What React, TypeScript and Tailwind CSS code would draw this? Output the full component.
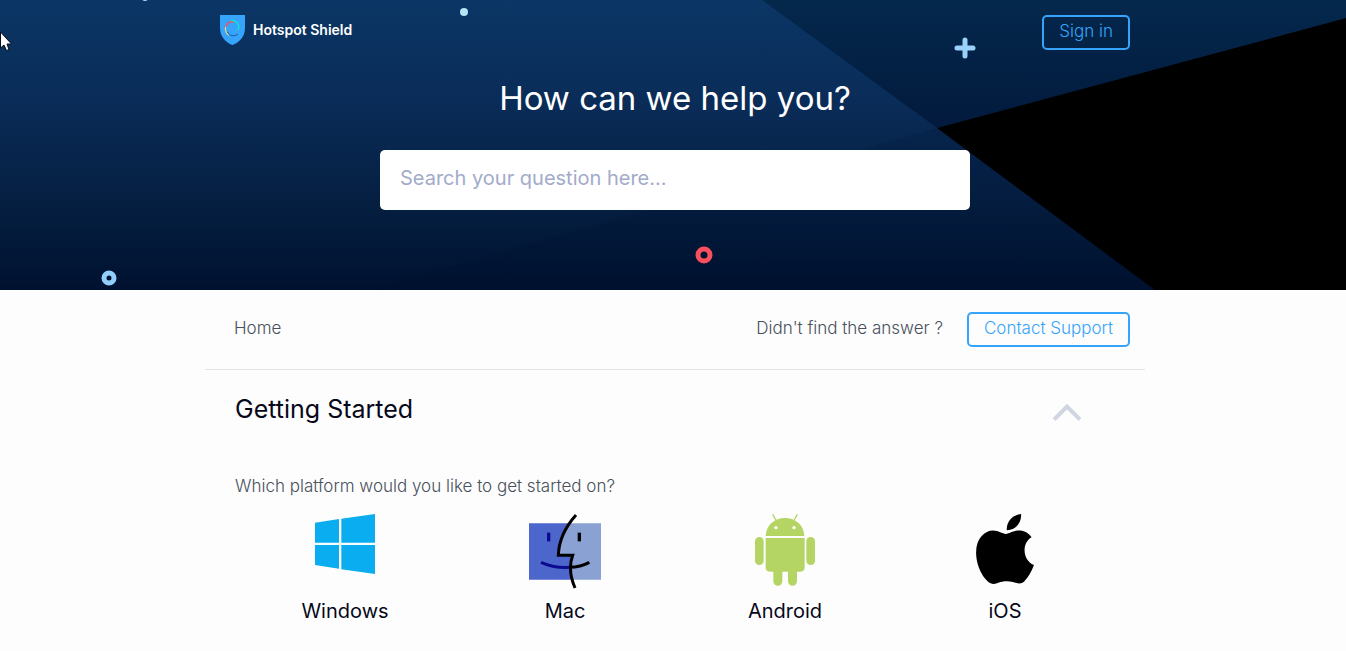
import type { ReactNode } from "react";

interface Platform {
  name: string;
  icon: ReactNode;
}

function WindowsIcon() {
  return (
    <svg className="w-[60px] h-[60px]" viewBox="0 0 180 180" fill="#0aadf0" aria-hidden="true">
      <path d="M0 26L72 15V86H0zM79 14L180 0V86H79zM0 93H72V164L0 153zM79 93H180V180L79 166z" />
    </svg>
  );
}

function MacIcon() {
  return (
    <svg className="w-[72px] h-[75px]" viewBox="0 0 216 225" fill="none" strokeWidth="9" aria-hidden="true">
      <path fill="#4d66cb" d="M0 28H118Q94 60 86 124H131Q118 160 130 197H0z" />
      <path fill="#8aa1d4" d="M118 28H216V197H130Q118 160 131 124H86Q94 60 118 28z" />
      <path stroke="#0d0a91" strokeWidth="10" d="M59 56V82" />
      <path stroke="#000" strokeWidth="10" d="M151 56V82" />
      <path stroke="#0d0a91" d="M36 145Q75 163 123 160" />
      <path stroke="#000" d="M121 160Q155 159 181 145" />
      <path stroke="#000" d="M141 3Q90 60 88 124H131Q115 168 138 222" />
    </svg>
  );
}

function AndroidIcon() {
  return (
    <svg className="w-[60px] h-[72px]" viewBox="0 0 180 216" fill="#b4d563" aria-hidden="true">
      <path stroke="#b4d563" strokeWidth="4" d="M53 1L64 21M127 1L116 21" />
      <path d="M32 66C33 34 58 12 90 12s57 22 58 54z" />
      <circle cx="63" cy="41" r="5" fill="#fdfdfd" />
      <circle cx="117" cy="41" r="5" fill="#fdfdfd" />
      <path d="M32 72H149V160Q149 173 136 173H45Q32 173 32 160z" />
      <rect x="0" y="69" width="26" height="84" rx="13" />
      <rect x="154" y="69" width="26" height="84" rx="13" />
      <path d="M55 165H82V202a13 13 0 0 1-27 0zM99 165H126V202a13 13 0 0 1-27 0z" />
    </svg>
  );
}

function AppleIcon() {
  return (
    <svg className="w-[58px] h-[70px]" viewBox="0 0 171 207" aria-hidden="true">
      <path d="M133 0C135 26 117 48 91 48C88 24 109 2 133 0z" />
      <path d="M88 59C98 59 108 49 127 49C142 49 156 57 164 69C134 86 137 137 171 151C164 171 152 189 143 199C129 213 113 199 91 199C70 199 63 207 52 207C29 207 0 160 0 114C0 72 26 49 50 49C66 49 78 59 88 59z" />
    </svg>
  );
}

const PLATFORMS: Platform[] = [
  { name: "Windows", icon: <WindowsIcon /> },
  { name: "Mac", icon: <MacIcon /> },
  { name: "Android", icon: <AndroidIcon /> },
  { name: "iOS", icon: <AppleIcon /> },
];

function HeroBackground() {
  return (
    <svg
      className="absolute inset-0 w-full h-full"
      viewBox="0 0 1346 290"
      preserveAspectRatio="xMidYMid slice"
      aria-hidden="true"
    >
      <defs>
        <linearGradient id="sky" x1="0" y1="0" x2="0" y2="1">
          <stop offset="0" stopColor="#0b3665" />
          <stop offset="0.35" stopColor="#0a2c58" />
          <stop offset="0.75" stopColor="#041d3e" />
          <stop offset="1" stopColor="#00112f" />
        </linearGradient>
        <linearGradient id="wedge" x1="0" y1="0" x2="0" y2="1">
          <stop offset="0" stopColor="#04284c" />
          <stop offset="1" stopColor="#021a3d" />
        </linearGradient>
      </defs>
      <rect width="1346" height="290" fill="url(#sky)" />
      <path d="M937 128L1155 290H370z" fill="#001030" opacity="0.15" />
      <path d="M762 0H1346V18L937 128z" fill="url(#wedge)" />
      <path d="M1346 18V290H1155L937 128z" fill="#000" />
      <circle cx="145" cy="-2" r="3" fill="#a9dcf0" />
      <circle cx="464" cy="12" r="4" fill="#b5e4f5" />
      <path d="M965 40V56M957 48H973" stroke="#99d1fb" strokeWidth="5" strokeLinecap="round" />
      <circle cx="109" cy="278" r="5" fill="none" stroke="#93cefa" strokeWidth="5" />
      <circle cx="704" cy="255" r="6" fill="none" stroke="#fb4f5e" strokeWidth="5" />
    </svg>
  );
}

function Logo() {
  return (
    <a href="#" className="flex items-center gap-2 text-white text-sm leading-5 font-semibold">
      <svg className="w-[25px] h-[30px]" viewBox="0 0 75 90" fill="none" aria-hidden="true">
        <path fill="#35a4fa" d="M0 0H75V38C75 65 58 82 37 90C17 82 0 65 0 38z" />
        <path stroke="#f0d18a" strokeWidth="4" d="M26 61C15 52 14 40 20 29" />
        <path stroke="#ee5368" strokeWidth="5" d="M17 36C20 24 30 18 43 21" />
        <path stroke="#0ce5d5" strokeWidth="4" d="M33 17C48 14 61 29 54 45" />
        <path stroke="#1560a8" strokeWidth="3" d="M22 50C27 63 43 66 54 57" />
      </svg>
      Hotspot Shield
    </a>
  );
}

function Hero() {
  return (
    <header className="relative h-[290px] pl-1 overflow-hidden">
      <HeroBackground />
      <div className="relative max-w-[940px] mx-auto px-[15px] pt-[15px]">
        <div className="flex items-start justify-between">
          <Logo />
          <a
            href="#"
            className="h-[35px] px-[15px] pb-0.5 flex items-center rounded-[5px] border-2 border-[#35a4fa] text-[#35a4fa] text-[17px] font-light"
          >
            Sign in
          </a>
        </div>
        <h1 className="mt-7 text-center text-white text-[33px] leading-10">How can we help you?</h1>
        <form className="mt-8" role="search">
          <input
            type="search"
            aria-label="Search"
            placeholder="Search your question here..."
            className="block w-full max-w-[590px] h-[60px] mx-auto px-5 pb-1 rounded-[5px] bg-white text-xl text-slate-900 placeholder:text-[#a2abc9]"
          />
        </form>
      </div>
      {/* Pointer */}
      <svg className="absolute left-0 top-[31px] w-3 h-5" viewBox="0 0 12 20" aria-hidden="true">
        <path d="M0.5 1V17L4 14L6.5 19.5L9 18.5L7 13H11.5z" fill="#fff" stroke="#0a0f22" />
      </svg>
    </header>
  );
}

export default function App() {
  return (
    <div className="min-h-screen bg-[#fdfdfd] font-['Inter',sans-serif]">
      <Hero />
      <main className="pl-1">
        <div className="max-w-[940px] mx-auto">
          <div className="h-20 pl-[29px] pr-[15px] flex items-center justify-between border-b border-[#e3e3e5] text-[17px] font-light text-[#48505c]">
            <nav aria-label="Breadcrumb" className="pb-0.5">
              <a href="#">Home</a>
            </nav>
            <div className="flex items-center gap-6">
              <span className="pb-0.5">Didn't find the answer ?</span>
              <a
                href="#"
                className="h-[35px] px-[15px] pb-0.5 flex items-center rounded-[5px] border-2 border-[#35a4fa] text-[#35a4fa]"
              >
                Contact Support
              </a>
            </div>
          </div>

          <section className="px-[30px]">
            <h2>
              <button
                type="button"
                aria-expanded="true"
                className="w-full h-20 pr-[34px] flex items-center justify-between text-[25px] text-[#06081a]"
              >
                Getting Started
                <svg className="w-7 h-[17px] mt-1" viewBox="0 0 28 17" fill="none" stroke="#d0d5e2" strokeWidth="4" aria-hidden="true">
                  <path d="M1 15.500L14 2.500L27 15.500" />
                </svg>
              </button>
            </h2>
            <p className="mt-6 text-[17px] leading-6 font-light text-[#48505c]">
              Which platform would you like to get started on?
            </p>
            <div className="mt-4 grid grid-cols-4">
              {PLATFORMS.map((platform) => (
                <a key={platform.name} href="#" className="flex flex-col items-center text-xl text-[#06081a]">
                  <span className="h-[83px]">{platform.icon}</span>
                  {platform.name}
                </a>
              ))}
            </div>
          </section>
        </div>
      </main>
    </div>
  );
}
